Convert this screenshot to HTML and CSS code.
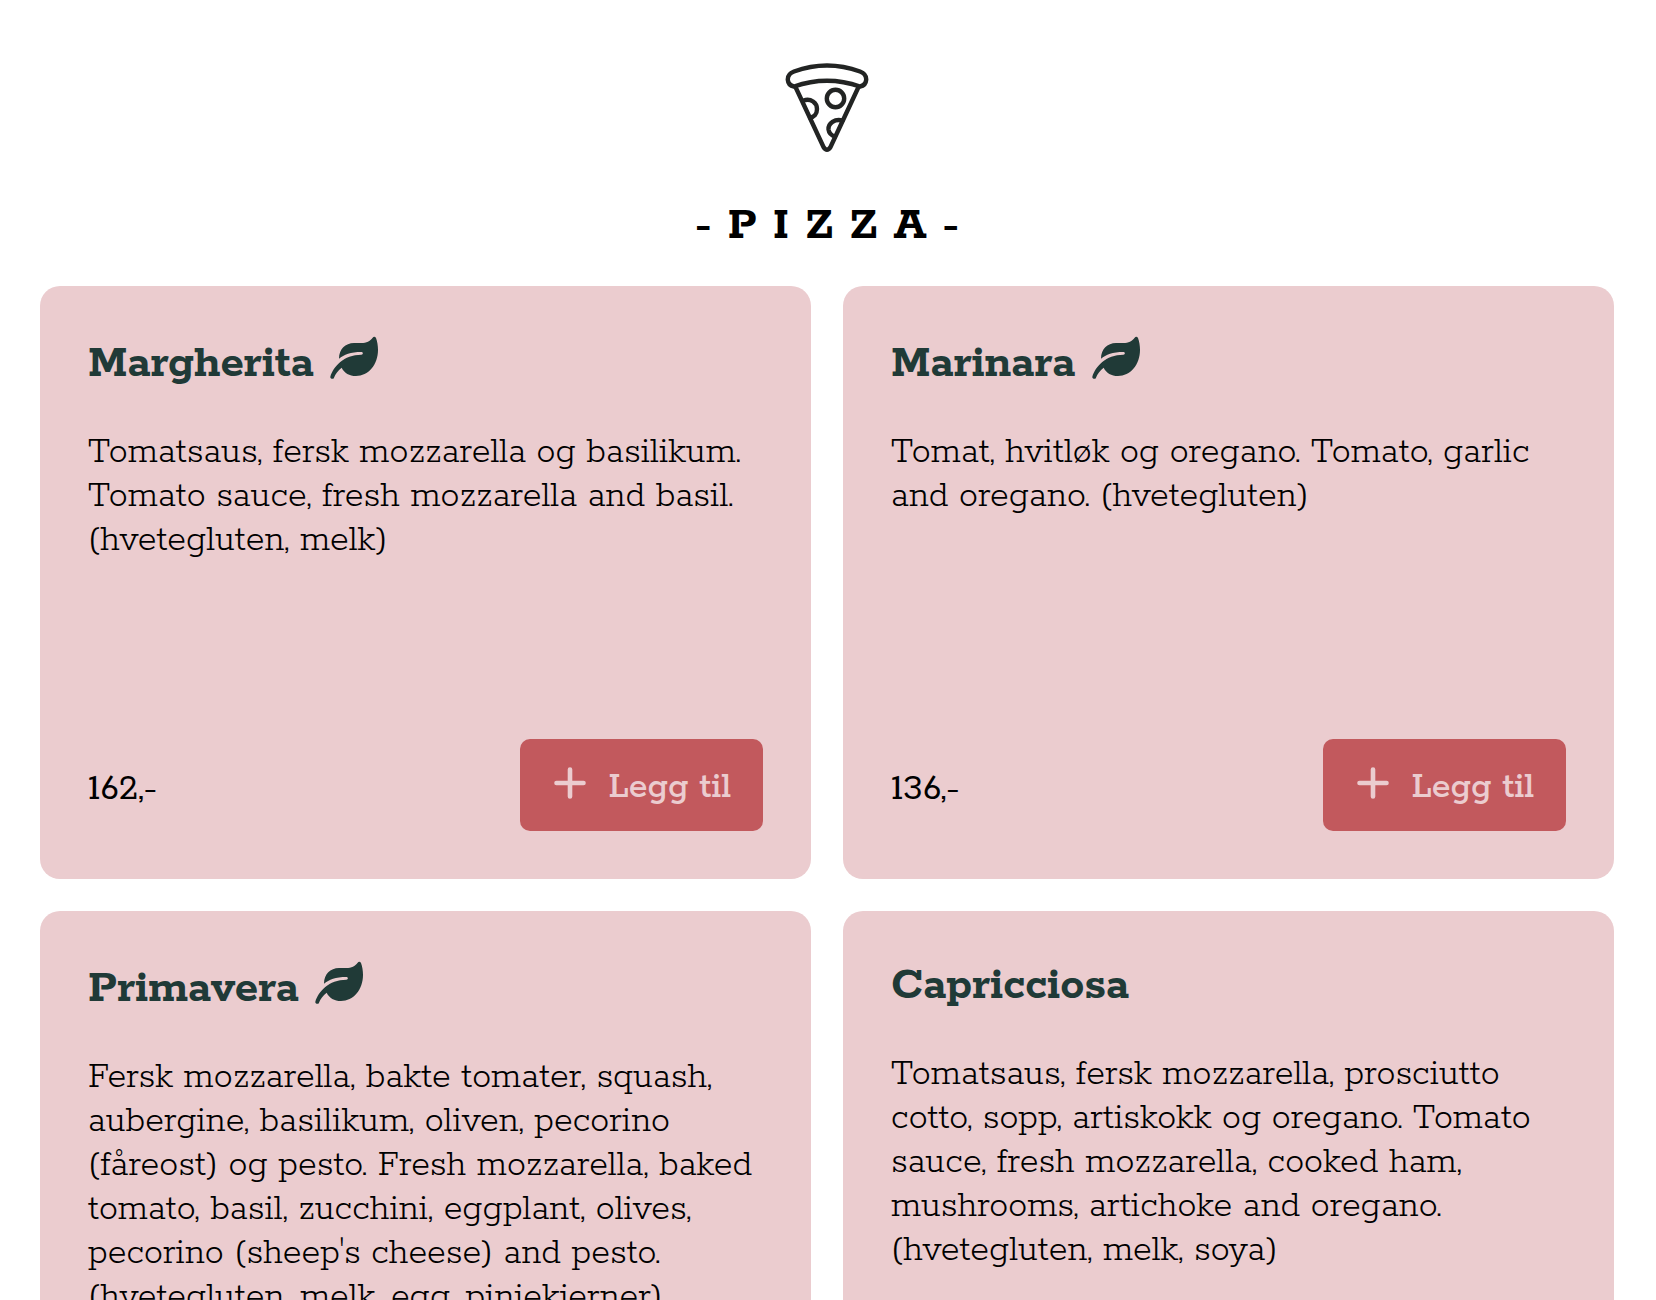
FILE: index.html
```html
<!DOCTYPE html>
<html lang="no">
<head>
<meta charset="utf-8">
<meta name="viewport" content="width=device-width, initial-scale=1">
<title>Pizza</title>
<link rel="stylesheet" href="styles.css">
</head>
<body>
<svg class="sprite" aria-hidden="true">
  <symbol id="leaf" viewBox="0 0 144 144"><path d="M27 74C27 46 46 27 72 27H94C110 27 120 21 128 11C131 7 136 8 138 12C142 22 144 36 144 48C144 92 115 126 78 126C58 126 43 117 35 101C24 109 16 120 12 131C10 137 0 135 1 128C10 98 41 62 94 62C100 62 100 54 94 54C62 54 42 62 27 74Z"/></symbol>
  <symbol id="plus" viewBox="0 0 32 32"><path d="M16 2.500v27M2.500 16h27" fill="none" stroke="currentColor" stroke-width="4.600" stroke-linecap="round"/></symbol>
</svg>
<main class="menu">
  <header class="menu-header">
    <svg class="pizza-icon" viewBox="0 0 84 90" aria-hidden="true">
      <g fill="none" stroke="#222423" stroke-width="4.400" stroke-linecap="round" stroke-linejoin="round">
        <path d="M9 8.500Q42-3.500 75 8.500C84 12 82.500 22 75 23.500Q42 12 9 23.500C1.500 22 0 12 9 8.500Z"/>
        <path d="M10.500 24L38.500 84Q42 89.500 45.500 84L73.500 24"/>
        <circle cx="50.500" cy="35.500" r="8.700"/>
        <path d="M18.500 37.500C26 35 32 40 32 46C32 51 29 54 25 54.500"/>
        <path d="M57.500 57.500C50 55.500 43 60 43.500 66.500C44 70 46 72.500 50 73.500"/>
      </g>
    </svg>
    <h1 class="menu-title">-PIZZA-</h1>
  </header>
  <section class="cards">
    <article class="card">
      <h2 class="card-title">Margherita <svg class="leaf"><use href="#leaf"/></svg></h2>
      <p class="card-text">Tomatsaus, fersk mozzarella og basilikum. Tomato sauce, fresh mozzarella and basil. (hvetegluten, melk)</p>
      <div class="card-footer">
        <span class="price">162,-</span>
        <button class="add" type="button"><svg class="plus"><use href="#plus"/></svg>Legg til</button>
      </div>
    </article>
    <article class="card">
      <h2 class="card-title">Marinara <svg class="leaf"><use href="#leaf"/></svg></h2>
      <p class="card-text">Tomat, hvitløk og oregano. Tomato, garlic and oregano. (hvetegluten)</p>
      <div class="card-footer">
        <span class="price">136,-</span>
        <button class="add" type="button"><svg class="plus"><use href="#plus"/></svg>Legg til</button>
      </div>
    </article>
    <article class="card">
      <h2 class="card-title">Primavera <svg class="leaf"><use href="#leaf"/></svg></h2>
      <p class="card-text">Fersk mozzarella, bakte tomater, squash, aubergine, basilikum, oliven, pecorino (fåreost) og pesto. Fresh mozzarella, baked tomato, basil, zucchini, eggplant, olives, pecorino (sheep's cheese) and pesto. (hvetegluten, melk, egg, pinjekjerner)</p>
    </article>
    <article class="card">
      <h2 class="card-title">Capricciosa</h2>
      <p class="card-text">Tomatsaus, fersk mozzarella, prosciutto cotto, sopp, artiskokk og oregano. Tomato sauce, fresh mozzarella, cooked ham, mushrooms, artichoke and oregano. (hvetegluten, melk, soya)</p>
    </article>
  </section>
</main>
</body>
</html>
```
FILE: styles.css
```css
* { box-sizing: border-box; }
body {
  margin: 0;
  background: #fff;
  color: #000;
  font-family: Rokkitt, "DejaVu Serif Condensed", "DejaVu Serif", serif;
}
.sprite { position: absolute; width: 0; height: 0; }
.menu { padding: 63px 42px 40px 40px; }
.menu-header {
  display: flex;
  flex-direction: column;
  align-items: center;
  gap: 45px;
  margin-bottom: 32px;
}
.pizza-icon { width: 84px; height: 90px; }
.menu-title {
  margin: 0;
  padding-left: 16px;
  font-size: 48px;
  line-height: 56px;
  letter-spacing: 16px;
}
.cards {
  display: grid;
  grid-template-columns: repeat(2, minmax(0, 1fr));
  grid-auto-rows: minmax(593px, auto);
  gap: 32px;
}
.card {
  display: flex;
  flex-direction: column;
  padding: 48px;
  border-radius: 20px;
  background: #ebcccf;
}
.card-title {
  margin: 0 0 40px;
  color: #203a37;
  font-size: 48px;
  line-height: 54px;
}
.leaf {
  width: 48px;
  height: 48px;
  margin-left: 2px;
  vertical-align: -6px;
  fill: currentColor;
}
.card-text {
  margin: 0;
  font-size: 38px;
  font-weight: 350;
  line-height: 44px;
}
.card-footer {
  display: flex;
  align-items: center;
  justify-content: space-between;
  margin-top: auto;
}
.price { padding-top: 8px; font-size: 40px; line-height: 44px; }
.add {
  display: flex;
  align-items: center;
  gap: 22px;
  height: 92px;
  padding: 4px 32px 0 34px;
  border: 0;
  border-radius: 10px;
  background: #c2595d;
  color: #ebcccf;
  font-family: inherit;
  font-size: 38px;
  font-weight: 500;
}
.plus { width: 32px; height: 32px; margin-bottom: 8px; }
```
